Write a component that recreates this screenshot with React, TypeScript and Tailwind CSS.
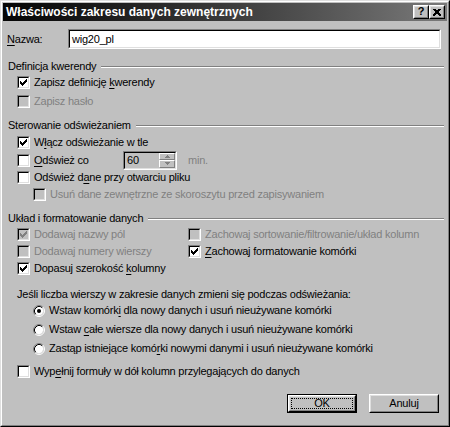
import React from 'react';

function Mn({ text }: { text: string }) {
  const i = text.indexOf('&');
  if (i < 0) return <>{text}</>;
  return (
    <>
      {text.slice(0, i)}
      <span className="underline decoration-1 underline-offset-[2px]">{text[i + 1]}</span>
      {text.slice(i + 2)}
    </>
  );
}

function Check({ checked, disabled }: { checked?: boolean; disabled?: boolean }) {
  return (
    <div className="w-[13px] h-[13px] shrink-0 border border-t-[#808080] border-l-[#808080] border-r-white border-b-white">
      <div
        className={
          'w-full h-full border border-t-black border-l-black border-r-[#dfdfdf] border-b-[#dfdfdf] p-[1px] ' +
          (disabled ? 'bg-[#c0c0c0]' : 'bg-white')
        }
      >
        {checked && (
          <svg width="7" height="7" viewBox="0 0 7 7" shapeRendering="crispEdges" className="block" fill={disabled ? '#808080' : '#000'}>
            {[2, 3, 4, 3, 2, 1, 0].map((y, x) => (
              <rect key={x} x={x} y={y} width="1" height="3" />
            ))}
          </svg>
        )}
      </div>
    </div>
  );
}

function Radio({ checked }: { checked?: boolean }) {
  return (
    <svg width="12" height="12" viewBox="0 0 12 12" className="shrink-0 block">
      <circle cx="6" cy="6" r="4.2" fill="#fff" />
      <path d="M2.11 9.89 A5.5 5.5 0 0 1 9.89 2.11" stroke="#808080" strokeWidth="1" fill="none" />
      <path d="M9.89 2.11 A5.5 5.5 0 0 1 2.11 9.89" stroke="#fff" strokeWidth="1" fill="none" />
      <path d="M2.82 9.18 A4.5 4.5 0 0 1 9.18 2.82" stroke="#000" strokeWidth="1" fill="none" />
      <path d="M9.18 2.82 A4.5 4.5 0 0 1 2.82 9.18" stroke="#dfdfdf" strokeWidth="1" fill="none" />
      {checked && <circle cx="6" cy="6" r="2" fill="#000" />}
    </svg>
  );
}

function CheckRow({
  label,
  checked,
  disabled,
  className = '',
}: {
  label: string;
  checked?: boolean;
  disabled?: boolean;
  className?: string;
}) {
  return (
    <div className={'flex items-center gap-[4px] ' + className}>
      <Check checked={checked} disabled={disabled} />
      <span className={'whitespace-nowrap ' + (disabled ? 'text-[#808080]' : 'text-black')}>
        <Mn text={label} />
      </span>
    </div>
  );
}

function RadioRow({ label, checked }: { label: string; checked?: boolean }) {
  return (
    <div className="flex items-center gap-[4px] h-[19px] pl-[16px]">
      <Radio checked={checked} />
      <span className="whitespace-nowrap">
        <Mn text={label} />
      </span>
    </div>
  );
}

function GroupHeader({ title, className = '' }: { title: string; className?: string }) {
  return (
    <div className={'flex items-center h-[14px] ' + className}>
      <span className="pl-[1px] whitespace-nowrap">{title}</span>
      <div className="flex-1 ml-[5px] mt-[2px] border-t border-t-[#808080] border-b border-b-white" />
    </div>
  );
}

function Button({ label, isDefault }: { label: string; isDefault?: boolean }) {
  return (
    <div className={'w-[70px] h-[19px] ' + (isDefault ? 'border border-black' : '')}>
      <div className="w-full h-full border border-t-white border-l-white border-r-black border-b-black">
        <div className="w-full h-full border border-t-[#dfdfdf] border-l-[#dfdfdf] border-r-[#808080] border-b-[#808080] flex items-center justify-center p-[1px]">
          <div
            className={
              'w-full h-full flex items-center justify-center ' +
              (isDefault ? 'border border-dotted border-black' : '')
            }
          >
            <Mn text={label} />
          </div>
        </div>
      </div>
    </div>
  );
}

function TitleButton({ children }: { children: React.ReactNode }) {
  return (
    <div className="w-[16px] h-[14px] bg-[#c0c0c0] border border-t-white border-l-white border-r-black border-b-black">
      <div className="w-full h-full border border-t-[#dfdfdf] border-l-[#dfdfdf] border-r-[#808080] border-b-[#808080] flex items-center justify-center">
        {children}
      </div>
    </div>
  );
}

export default function App() {
  return (
    <div className="w-[450px] h-[427px] bg-[#c0c0c0] text-[11px] leading-[13px] tracking-[-0.22px] text-black font-['Liberation_Sans',Arial,sans-serif] border border-t-[#dfdfdf] border-l-[#dfdfdf] border-r-black border-b-black">
      <div className="w-full h-full border border-t-white border-l-white border-r-[#808080] border-b-[#808080] p-[1px] flex flex-col">
        {/* Title bar */}
        <div className="h-[18px] flex items-center justify-between bg-linear-to-r from-[#060606] to-[#7a7a7a] pl-[3px] pr-[2px]">
          <span className="text-white font-bold text-[12px] tracking-normal whitespace-nowrap">Właściwości zakresu danych zewnętrznych</span>
          <div className="flex">
            <TitleButton>
              <span className="font-bold text-[11px] leading-none -mt-[1px] tracking-normal">?</span>
            </TitleButton>
            <TitleButton>
              <svg width="8" height="7" viewBox="0 0 8 7" shapeRendering="crispEdges">
                <path d="M0.5 0 L7.5 7 M1.5 0 L8.5 7 M7.5 0 L0.5 7 M6.5 0 L-0.5 7" stroke="#000" strokeWidth="1" />
              </svg>
            </TitleButton>
          </div>
        </div>

        {/* Body */}
        <div className="flex flex-col pl-[4px] pr-[3px]">
          {/* Name row */}
          <div className="flex items-center mt-[8px] h-[20px] pr-[3px]">
            <span className="w-[61px]">
              <Mn text="&Nazwa:" />
            </span>
            <div className="flex-1 h-[20px] border border-t-[#808080] border-l-[#808080] border-r-white border-b-white">
              <div className="w-full h-full border border-t-black border-l-black border-r-[#dfdfdf] border-b-[#dfdfdf] bg-white flex items-center pl-[2px]">
                wig20_pl
              </div>
            </div>
          </div>

          {/* Definicja kwerendy */}
          <GroupHeader title="Definicja kwerendy" className="mt-[10px]" />
          <div className="flex flex-col pl-[10px]">
            <CheckRow label="Zapisz definicję &kwerendy" checked className="h-[19px]" />
            <CheckRow label="Zapisz hasło" disabled className="h-[19px]" />
          </div>

          {/* Sterowanie odświeżaniem */}
          <GroupHeader title="Sterowanie odświeżaniem" className="mt-[7px]" />
          <div className="flex flex-col pl-[10px] mt-[1px]">
            <CheckRow label="W&łącz odświeżanie w tle" checked className="h-[18px]" />
            <div className="flex items-center h-[18px]">
              <CheckRow label="&Odśwież co" className="w-[106px]" />
              <div className="w-[54px] h-[19px] border border-t-[#808080] border-l-[#808080] border-r-white border-b-white">
                <div className="w-full h-full border border-t-black border-l-black border-r-[#dfdfdf] border-b-[#dfdfdf] bg-[#c0c0c0] flex">
                  <div className="flex-1 flex items-center pl-[2px]">60</div>
                  <div className="w-[16px] flex flex-col">
                    <div className="flex-1 border border-t-white border-l-white border-r-[#808080] border-b-[#808080] flex items-center justify-center">
                      <svg width="5" height="3" viewBox="0 0 5 3" shapeRendering="crispEdges">
                        <path d="M2.5 0 L5 3 L0 3 Z" fill="#808080" />
                      </svg>
                    </div>
                    <div className="flex-1 border border-t-white border-l-white border-r-[#808080] border-b-[#808080] flex items-center justify-center">
                      <svg width="5" height="3" viewBox="0 0 5 3" shapeRendering="crispEdges">
                        <path d="M0 0 L5 0 L2.5 3 Z" fill="#808080" />
                      </svg>
                    </div>
                  </div>
                </div>
              </div>
              <span className="ml-[11px] text-[#808080]">min.</span>
            </div>
            <CheckRow label="Odśwież d&ane przy otwarciu pliku" className="h-[17px]" />
            <CheckRow label="Usuń dane zewnętrzne ze skoroszytu przed zapisywaniem" disabled className="h-[16px] pl-[16px]" />
          </div>

          {/* Układ i formatowanie danych */}
          <GroupHeader title="Układ i formatowanie danych" className="mt-[9px]" />
          <div className="grid grid-cols-[171px_1fr] pl-[10px] mt-[1px]">
            <CheckRow label="Dodawaj nazwy pól" checked disabled className="h-[17px]" />
            <CheckRow label="Zachowaj sortowanie/filtrowanie/układ kolumn" disabled className="h-[17px]" />
            <CheckRow label="Dodawaj numery wierszy" disabled className="h-[17px]" />
            <CheckRow label="&Zachowaj formatowanie komórki" checked className="h-[17px]" />
            <CheckRow label="Dopasuj szerokość &kolumny" checked className="h-[17px]" />
          </div>

          <div className="flex flex-col pl-[10px]">
            <div className="h-[14px] mt-[10px] flex items-center whitespace-nowrap">
              Jeśli liczba wierszy w zakresie danych zmieni się podczas odświeżania:
            </div>
            <RadioRow label="Wstaw komórk&i dla nowy danych i usuń nieużywane komórki" checked />
            <RadioRow label="Wstaw &całe wiersze dla nowy danych i usuń nieużywane komórki" />
            <RadioRow label="Zastąp istniejące komó&rki nowymi danymi i usuń nieużywane komórki" />
            <CheckRow label="Wyp&ełnij formuły w dół kolumn przylegających do danych" className="h-[17px] mt-[5px]" />
          </div>

          {/* Buttons */}
          <div className="flex justify-end gap-[12px] mt-[14px] pr-[5px]">
            <Button label="OK" isDefault />
            <Button label="Anuluj" />
          </div>
        </div>
      </div>
    </div>
  );
}
